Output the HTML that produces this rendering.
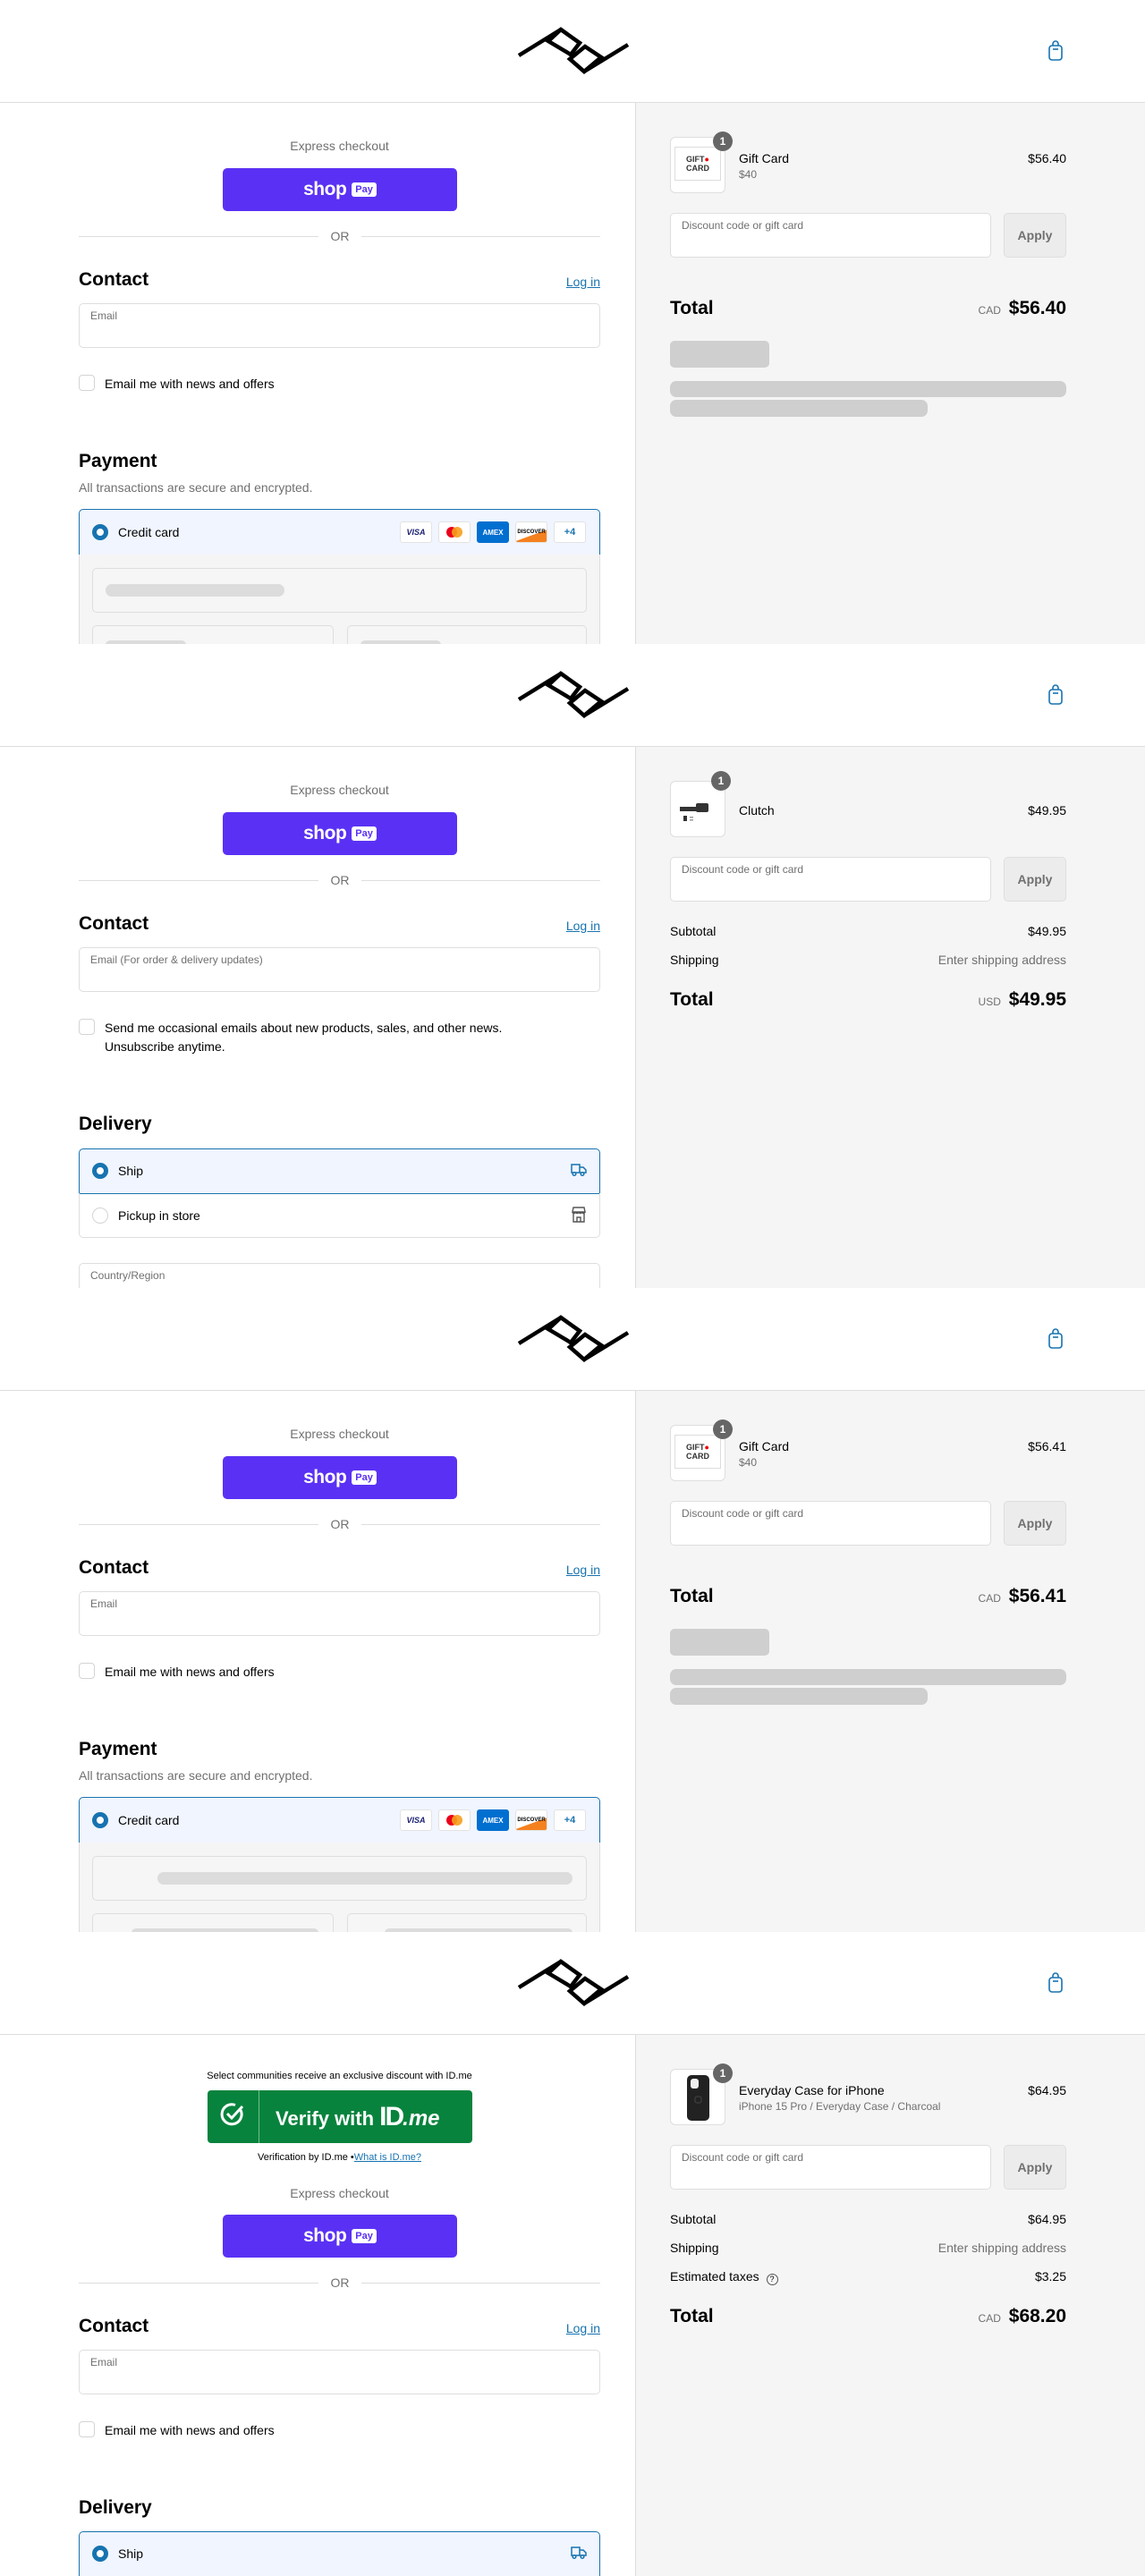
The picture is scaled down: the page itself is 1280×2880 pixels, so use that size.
<!DOCTYPE html>
<html><head><meta charset="utf-8"><style>
*{margin:0;padding:0;box-sizing:border-box}
body{width:1280px;height:2880px;font-family:"Liberation Sans",sans-serif;color:#000;background:#fff}
.p{position:relative;height:720px;overflow:hidden;background:#fff}
.a{position:absolute}
.hdr{left:0;top:0;width:1280px;height:115px;border-bottom:1px solid #dedede;background:#fff}
.right{left:710px;top:115px;width:570px;height:605px;background:#f5f5f5;border-left:1px solid #dedede}
.t14{font-size:14px;line-height:20px}
.grey{color:#707070}
.h{font-size:21px;font-weight:bold;line-height:26px}
.shop{left:249px;width:262px;height:48px;background:#5a31f4;border-radius:5px;color:#fff;display:flex;align-items:center;justify-content:center;gap:6px}
.shop b{font-size:21px;font-weight:bold;letter-spacing:-0.5px}
.shop span{background:#fff;color:#5a31f4;font-size:11px;font-weight:bold;padding:2px 4px;border-radius:3px}
.orl{height:1px;background:#dedede}
.inp{left:88px;width:583px;height:50px;border:1px solid #dedede;border-radius:5px;background:#fff}
.inp i{position:absolute;left:12px;top:6px;font-style:normal;font-size:12px;color:#707070}
.cb{left:88px;width:18px;height:18px;border:1px solid #d4d4d4;border-radius:4px;background:#fff}
.login{right:609px;color:#1773b0;text-decoration:underline;font-size:14px}
.radio{width:18px;height:18px;border-radius:50%;border:5px solid #1773b0;background:#fff}
.radio0{width:18px;height:18px;border-radius:50%;border:1px solid #d4d4d4;background:#fff}
.card{width:36px;height:24px;border:1px solid #e3e3e3;border-radius:3px;background:#fff;display:flex;align-items:center;justify-content:center;font-size:9px;font-weight:bold}
.sk{background:#dcdcdc;border-radius:7px}
.thumb{left:749px;width:62px;height:63px;border:1px solid #dedede;border-radius:6px;background:#fff;overflow:hidden}
.badge{width:22px;height:22px;border-radius:50%;background:#666;color:#fff;font-size:12px;font-weight:bold;text-align:center;line-height:22px}
.disc{left:749px;width:359px;height:50px;border:1px solid #dedede;border-radius:5px;background:#fff}
.disc i{position:absolute;left:12px;top:6px;font-style:normal;font-size:12px;color:#707070}
.apply{left:1122px;width:70px;height:50px;border:1px solid #dedede;border-radius:5px;background:#ececec;color:#707070;font-weight:bold;font-size:14px;text-align:center;line-height:48px}
.r{right:88px;text-align:right}
</style></head><body>

<!-- PANEL 1 -->
<div class="p">
 <div class="a hdr"></div>
 <svg class="a" style="left:0;top:0" width="1280" height="115">
  <g fill="none" stroke="#000" stroke-width="4.5" stroke-linejoin="miter">
   <line x1="580" y1="62" x2="627" y2="33"/>
   <polygon points="627,33 648,48 638,61 613,46"/>
   <polygon points="654,52 672,64 653,80 637,66"/>
   <line x1="653" y1="80" x2="702" y2="50"/>
  </g>
  <g fill="none" stroke="#1773b0" stroke-width="1.6"><rect x="1173" y="51" width="14" height="16" rx="3"/><path d="M1177 51v-2a3 3 0 0 1 6 0v2"/><path d="M1177 55h6"/></g>
 </svg>
 <div class="a right"></div>
 <div class="a t14 grey" style="left:88px;width:583px;top:153px;text-align:center">Express checkout</div>
 <div class="a shop" style="top:188px"><b>shop</b><span>Pay</span></div>
 <div class="a orl" style="left:88px;width:268px;top:264px"></div>
 <div class="a orl" style="left:404px;width:267px;top:264px"></div>
 <div class="a t14 grey" style="left:356px;width:48px;top:254px;text-align:center">OR</div>
 <div class="a h" style="left:88px;top:300px">Contact</div>
 <div class="a login t14" style="top:305px">Log in</div>
 <div class="a inp" style="top:339px"><i>Email</i></div>
 <div class="a cb" style="top:419px"></div>
 <div class="a t14" style="left:117px;top:419px">Email me with news and offers</div>
 <div class="a h" style="left:88px;top:503px">Payment</div>
 <div class="a t14 grey" style="left:88px;top:535px">All transactions are secure and encrypted.</div>
 <div class="a" style="left:88px;top:569px;width:583px;height:52px;background:#f0f5ff;border:1px solid #1773b0;border-radius:5px 5px 0 0"></div>
 <div class="a radio" style="left:103px;top:586px"></div>
 <div class="a t14" style="left:132px;top:585px">Credit card</div>
 <div class="a card" style="left:447px;top:583px;color:#1a1f71;font-style:italic">VISA</div>
 <div class="a card" style="left:490px;top:583px"><svg width="22" height="14"><circle cx="8" cy="7" r="6" fill="#eb001b"/><circle cx="14" cy="7" r="6" fill="#f79e1b" opacity=".9"/></svg></div>
 <div class="a card" style="left:533px;top:583px;background:#016fd0;color:#fff;border-color:#016fd0;font-size:8px">AMEX</div>
 <div class="a card" style="left:576px;top:583px;font-size:6px;background:linear-gradient(160deg,#fff 60%,#f48120 61%)">DISCOVER</div>
 <div class="a card" style="left:619px;top:583px;color:#1773b0;font-size:11px">+4</div>
 <div class="a" style="left:88px;top:620px;width:583px;height:100px;background:#f5f5f5;border-left:1px solid #dedede;border-right:1px solid #dedede"></div>
 <div class="a" style="left:103px;top:635px;width:553px;height:50px;border:1px solid #dedede;border-radius:5px;background:#f6f6f6"></div>
 <div class="a sk" style="left:118px;top:653px;width:200px;height:14px"></div>
 <div class="a" style="left:103px;top:699px;width:270px;height:50px;border:1px solid #dedede;border-radius:5px;background:#f6f6f6"></div>
 <div class="a" style="left:388px;top:699px;width:268px;height:50px;border:1px solid #dedede;border-radius:5px;background:#f6f6f6"></div>
 <div class="a sk" style="left:118px;top:716px;width:90px;height:10px"></div>
 <div class="a sk" style="left:403px;top:716px;width:90px;height:10px"></div>
 <div class="a thumb" style="top:153px"><div style="margin:10px 4px;height:38px;border:1px solid #ddd;font-size:9px;font-weight:bold;color:#333;text-align:center;line-height:10px;padding-top:8px">GIFT<span style="color:#e00">●</span><br>CARD</div></div>
 <div class="a badge" style="left:797px;top:147px">1</div>
 <div class="a t14" style="left:826px;top:167px">Gift Card</div>
 <div class="a grey" style="left:826px;top:188px;font-size:12px">$40</div>
 <div class="a t14 r" style="top:167px">$56.40</div>
 <div class="a disc" style="top:238px"><i>Discount code or gift card</i></div>
 <div class="a apply" style="top:238px">Apply</div>
 <div class="a h" style="left:749px;top:332px">Total</div>
 <div class="a r" style="top:332px;line-height:26px"><span class="grey" style="font-size:12px">CAD</span>&nbsp; <b style="font-size:21px">$56.40</b></div>
 <div class="a sk" style="left:749px;top:381px;width:111px;height:30px;background:#cfcfcf;border-radius:5px"></div>
 <div class="a sk" style="left:749px;top:426px;width:443px;height:18px;background:#cfcfcf"></div>
 <div class="a sk" style="left:749px;top:447px;width:288px;height:19px;background:#cfcfcf"></div>
</div>

<!-- PANEL 2 -->
<div class="p">
 <div class="a hdr"></div>
 <svg class="a" style="left:0;top:0" width="1280" height="115">
  <g fill="none" stroke="#000" stroke-width="4.5"><line x1="580" y1="62" x2="627" y2="33"/><polygon points="627,33 648,48 638,61 613,46"/><polygon points="654,52 672,64 653,80 637,66"/><line x1="653" y1="80" x2="702" y2="50"/></g>
  <g fill="none" stroke="#1773b0" stroke-width="1.6"><rect x="1173" y="51" width="14" height="16" rx="3"/><path d="M1177 51v-2a3 3 0 0 1 6 0v2"/><path d="M1177 55h6"/></g>
 </svg>
 <div class="a right"></div>
 <div class="a t14 grey" style="left:88px;width:583px;top:153px;text-align:center">Express checkout</div>
 <div class="a shop" style="top:188px"><b>shop</b><span>Pay</span></div>
 <div class="a orl" style="left:88px;width:268px;top:264px"></div>
 <div class="a orl" style="left:404px;width:267px;top:264px"></div>
 <div class="a t14 grey" style="left:356px;width:48px;top:254px;text-align:center">OR</div>
 <div class="a h" style="left:88px;top:300px">Contact</div>
 <div class="a login t14" style="top:305px">Log in</div>
 <div class="a inp" style="top:339px"><i>Email (For order &amp; delivery updates)</i></div>
 <div class="a cb" style="top:419px"></div>
 <div class="a t14" style="left:117px;top:419px;line-height:21px">Send me occasional emails about new products, sales, and other news.<br>Unsubscribe anytime.</div>
 <div class="a h" style="left:88px;top:524px">Delivery</div>
 <div class="a" style="left:88px;top:564px;width:583px;height:51px;background:#f0f5ff;border:1px solid #1773b0;border-radius:5px 5px 0 0"></div>
 <div class="a radio" style="left:103px;top:580px"></div>
 <div class="a t14" style="left:132px;top:579px">Ship</div>
 <svg class="a" style="left:638px;top:580px" width="18" height="16" fill="none" stroke="#1773b0" stroke-width="1.5"><path d="M1 2h9v9H1zM10 5h4l3 3v3h-7"/><circle cx="4" cy="12.5" r="1.8" fill="#f0f5ff"/><circle cx="13" cy="12.5" r="1.8" fill="#f0f5ff"/></svg>
 <div class="a" style="left:88px;top:614px;width:583px;height:50px;border:1px solid #dedede;border-top:none;border-radius:0 0 5px 5px"></div>
 <div class="a radio0" style="left:103px;top:630px"></div>
 <div class="a t14" style="left:132px;top:629px">Pickup in store</div>
 <svg class="a" style="left:639px;top:629px" width="16" height="18" fill="none" stroke="#555" stroke-width="1.4"><path d="M2 1h12l1 5H1zM1 6c0 2 3 2 3.5 0c.5 2 3 2 3.5 0c.5 2 3 2 3.5 0c.5 2 3 2 3.5 0M2 8v9h12V8M6 17v-5h4v5"/></svg>
 <div class="a inp" style="top:692px"><i>Country/Region</i></div>
 <div class="a thumb" style="top:153px"><svg width="62" height="63"><rect x="10" y="28" width="20" height="5" fill="#333"/><rect x="28" y="24" width="14" height="10" rx="2" fill="#333"/><rect x="14" y="38" width="4" height="6" fill="#333"/><rect x="21" y="39" width="4" height="1.5" fill="#999"/><rect x="21" y="42" width="4" height="1.5" fill="#999"/></svg></div>
 <div class="a badge" style="left:795px;top:142px">1</div>
 <div class="a t14" style="left:826px;top:176px">Clutch</div>
 <div class="a t14 r" style="top:176px">$49.95</div>
 <div class="a disc" style="top:238px"><i>Discount code or gift card</i></div>
 <div class="a apply" style="top:238px">Apply</div>
 <div class="a t14" style="left:749px;top:311px">Subtotal</div>
 <div class="a t14 r" style="top:311px">$49.95</div>
 <div class="a t14" style="left:749px;top:343px">Shipping</div>
 <div class="a t14 r grey" style="top:343px">Enter shipping address</div>
 <div class="a h" style="left:749px;top:385px">Total</div>
 <div class="a r" style="top:385px;line-height:26px"><span class="grey" style="font-size:12px">USD</span>&nbsp; <b style="font-size:21px">$49.95</b></div>
</div>

<!-- PANEL 3 -->
<div class="p">
 <div class="a hdr"></div>
 <svg class="a" style="left:0;top:0" width="1280" height="115">
  <g fill="none" stroke="#000" stroke-width="4.5"><line x1="580" y1="62" x2="627" y2="33"/><polygon points="627,33 648,48 638,61 613,46"/><polygon points="654,52 672,64 653,80 637,66"/><line x1="653" y1="80" x2="702" y2="50"/></g>
  <g fill="none" stroke="#1773b0" stroke-width="1.6"><rect x="1173" y="51" width="14" height="16" rx="3"/><path d="M1177 51v-2a3 3 0 0 1 6 0v2"/><path d="M1177 55h6"/></g>
 </svg>
 <div class="a right"></div>
 <div class="a t14 grey" style="left:88px;width:583px;top:153px;text-align:center">Express checkout</div>
 <div class="a shop" style="top:188px"><b>shop</b><span>Pay</span></div>
 <div class="a orl" style="left:88px;width:268px;top:264px"></div>
 <div class="a orl" style="left:404px;width:267px;top:264px"></div>
 <div class="a t14 grey" style="left:356px;width:48px;top:254px;text-align:center">OR</div>
 <div class="a h" style="left:88px;top:300px">Contact</div>
 <div class="a login t14" style="top:305px">Log in</div>
 <div class="a inp" style="top:339px"><i>Email</i></div>
 <div class="a cb" style="top:419px"></div>
 <div class="a t14" style="left:117px;top:419px">Email me with news and offers</div>
 <div class="a h" style="left:88px;top:503px">Payment</div>
 <div class="a t14 grey" style="left:88px;top:535px">All transactions are secure and encrypted.</div>
 <div class="a" style="left:88px;top:569px;width:583px;height:52px;background:#f0f5ff;border:1px solid #1773b0;border-radius:5px 5px 0 0"></div>
 <div class="a radio" style="left:103px;top:586px"></div>
 <div class="a t14" style="left:132px;top:585px">Credit card</div>
 <div class="a card" style="left:447px;top:583px;color:#1a1f71;font-style:italic">VISA</div>
 <div class="a card" style="left:490px;top:583px"><svg width="22" height="14"><circle cx="8" cy="7" r="6" fill="#eb001b"/><circle cx="14" cy="7" r="6" fill="#f79e1b" opacity=".9"/></svg></div>
 <div class="a card" style="left:533px;top:583px;background:#016fd0;color:#fff;border-color:#016fd0;font-size:8px">AMEX</div>
 <div class="a card" style="left:576px;top:583px;font-size:6px;background:linear-gradient(160deg,#fff 60%,#f48120 61%)">DISCOVER</div>
 <div class="a card" style="left:619px;top:583px;color:#1773b0;font-size:11px">+4</div>
 <div class="a" style="left:88px;top:620px;width:583px;height:100px;background:#f5f5f5;border-left:1px solid #dedede;border-right:1px solid #dedede"></div>
 <div class="a" style="left:103px;top:635px;width:553px;height:50px;border:1px solid #dedede;border-radius:5px;background:#f6f6f6"></div>
 <div class="a sk" style="left:176px;top:653px;width:464px;height:14px"></div>
 <div class="a" style="left:103px;top:699px;width:270px;height:50px;border:1px solid #dedede;border-radius:5px;background:#f6f6f6"></div>
 <div class="a" style="left:388px;top:699px;width:268px;height:50px;border:1px solid #dedede;border-radius:5px;background:#f6f6f6"></div>
 <div class="a sk" style="left:147px;top:716px;width:209px;height:10px"></div>
 <div class="a sk" style="left:430px;top:716px;width:210px;height:10px"></div>
 <div class="a thumb" style="top:153px"><div style="margin:10px 4px;height:38px;border:1px solid #ddd;font-size:9px;font-weight:bold;color:#333;text-align:center;line-height:10px;padding-top:8px">GIFT<span style="color:#e00">●</span><br>CARD</div></div>
 <div class="a badge" style="left:797px;top:147px">1</div>
 <div class="a t14" style="left:826px;top:167px">Gift Card</div>
 <div class="a grey" style="left:826px;top:188px;font-size:12px">$40</div>
 <div class="a t14 r" style="top:167px">$56.41</div>
 <div class="a disc" style="top:238px"><i>Discount code or gift card</i></div>
 <div class="a apply" style="top:238px">Apply</div>
 <div class="a h" style="left:749px;top:332px">Total</div>
 <div class="a r" style="top:332px;line-height:26px"><span class="grey" style="font-size:12px">CAD</span>&nbsp; <b style="font-size:21px">$56.41</b></div>
 <div class="a sk" style="left:749px;top:381px;width:111px;height:30px;background:#cfcfcf;border-radius:5px"></div>
 <div class="a sk" style="left:749px;top:426px;width:443px;height:18px;background:#cfcfcf"></div>
 <div class="a sk" style="left:749px;top:447px;width:288px;height:19px;background:#cfcfcf"></div>
</div>

<!-- PANEL 4 -->
<div class="p">
 <div class="a hdr"></div>
 <svg class="a" style="left:0;top:0" width="1280" height="115">
  <g fill="none" stroke="#000" stroke-width="4.5"><line x1="580" y1="62" x2="627" y2="33"/><polygon points="627,33 648,48 638,61 613,46"/><polygon points="654,52 672,64 653,80 637,66"/><line x1="653" y1="80" x2="702" y2="50"/></g>
  <g fill="none" stroke="#1773b0" stroke-width="1.6"><rect x="1173" y="51" width="14" height="16" rx="3"/><path d="M1177 51v-2a3 3 0 0 1 6 0v2"/><path d="M1177 55h6"/></g>
 </svg>
 <div class="a right"></div>
 <div class="a" style="left:88px;width:583px;top:154px;text-align:center;font-size:11px;line-height:14px">Select communities receive an exclusive discount with ID.me</div>
 <div class="a" style="left:232px;top:177px;width:296px;height:59px;background:#08833d;border-radius:4px"></div>
 <div class="a" style="left:289px;top:177px;width:1px;height:59px;background:#6fbf8f"></div>
 <svg class="a" style="left:246px;top:190px" width="28" height="28" fill="none" stroke="#fff" stroke-width="3"><path d="M23 9A11 11 0 1 1 17 3.5"/><path d="M8 13l5 5 12-13"/></svg>
 <div class="a" style="left:308px;top:193px;color:#fff;font-size:22px;font-weight:bold;line-height:28px;white-space:nowrap">Verify with <span style="font-size:30px;font-weight:900;letter-spacing:-2px">ID</span><span style="font-style:italic;font-size:24px">.me</span></div>
 <div class="a" style="left:88px;width:583px;top:245px;text-align:center;font-size:11px;line-height:14px">Verification by ID.me •<span style="color:#1773b0;text-decoration:underline">What is ID.me?</span></div>
 <div class="a t14 grey" style="left:88px;width:583px;top:282px;text-align:center">Express checkout</div>
 <div class="a shop" style="top:316px"><b>shop</b><span>Pay</span></div>
 <div class="a orl" style="left:88px;width:268px;top:392px"></div>
 <div class="a orl" style="left:404px;width:267px;top:392px"></div>
 <div class="a t14 grey" style="left:356px;width:48px;top:382px;text-align:center">OR</div>
 <div class="a h" style="left:88px;top:428px">Contact</div>
 <div class="a login t14" style="top:433px">Log in</div>
 <div class="a inp" style="top:467px"><i>Email</i></div>
 <div class="a cb" style="top:547px"></div>
 <div class="a t14" style="left:117px;top:547px">Email me with news and offers</div>
 <div class="a h" style="left:88px;top:631px">Delivery</div>
 <div class="a" style="left:88px;top:670px;width:583px;height:60px;background:#f0f5ff;border:1px solid #1773b0;border-radius:5px 5px 0 0"></div>
 <div class="a radio" style="left:103px;top:686px"></div>
 <div class="a t14" style="left:132px;top:685px">Ship</div>
 <svg class="a" style="left:638px;top:686px" width="18" height="16" fill="none" stroke="#1773b0" stroke-width="1.5"><path d="M1 2h9v9H1zM10 5h4l3 3v3h-7"/><circle cx="4" cy="12.5" r="1.8" fill="#f0f5ff"/><circle cx="13" cy="12.5" r="1.8" fill="#f0f5ff"/></svg>
 <div class="a thumb" style="top:153px"><svg width="62" height="63"><rect x="18" y="6" width="25" height="51" rx="5" fill="#222"/><rect x="22" y="10" width="9" height="11" rx="3" fill="#eee"/><rect x="27" y="30" width="7" height="7" rx="2" fill="none" stroke="#444"/></svg></div>
 <div class="a badge" style="left:797px;top:147px">1</div>
 <div class="a t14" style="left:826px;top:167px">Everyday Case for iPhone</div>
 <div class="a grey" style="left:826px;top:188px;font-size:12px">iPhone 15 Pro / Everyday Case / Charcoal</div>
 <div class="a t14 r" style="top:167px">$64.95</div>
 <div class="a disc" style="top:238px"><i>Discount code or gift card</i></div>
 <div class="a apply" style="top:238px">Apply</div>
 <div class="a t14" style="left:749px;top:311px">Subtotal</div>
 <div class="a t14 r" style="top:311px">$64.95</div>
 <div class="a t14" style="left:749px;top:343px">Shipping</div>
 <div class="a t14 r grey" style="top:343px">Enter shipping address</div>
 <div class="a t14" style="left:749px;top:375px">Estimated taxes <span style="display:inline-block;width:13px;height:13px;border:1px solid #555;border-radius:50%;font-size:9px;text-align:center;line-height:11px;margin-left:4px;vertical-align:-1px">?</span></div>
 <div class="a t14 r" style="top:375px">$3.25</div>
 <div class="a h" style="left:749px;top:417px">Total</div>
 <div class="a r" style="top:417px;line-height:26px"><span class="grey" style="font-size:12px">CAD</span>&nbsp; <b style="font-size:21px">$68.20</b></div>
</div>

</body></html>
